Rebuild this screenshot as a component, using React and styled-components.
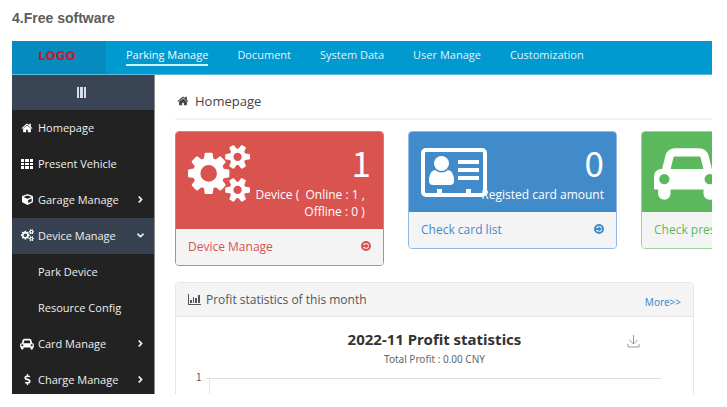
import React from 'react';
import { useState } from "react"
import styled, { createGlobalStyle } from "styled-components"
import { FaCube, FaDollarSign, FaAngleRight, FaAngleDown } from "react-icons/fa"

const GlobalStyle = createGlobalStyle`
	* {
		box-sizing: border-box;
	}
	body {
		margin: 0;
		background: white;
		font-family: "Open Sans", "Noto Sans", sans-serif;
	}
`;

const Page = styled.div`
	display: flex;
	flex-direction: column;
	height: 100vh;
	padding: 10px 15px 13px 12px;
`;

const Heading = styled.h1`
	margin: 0 0 15px;
	font: bold 14px/16px "Liberation Sans", Arial, sans-serif;
	color: #5c5c5c;
`;

const Frame = styled.div`
	display: flex;
	flex-direction: column;
	flex: 1;
	min-height: 0;
	overflow: hidden;
`;

const TopBar = styled.header`
	display: flex;
	flex: none;
	height: 34px;
	background: #0099d0;
	border-bottom: 1px solid #5fb9dd;
`;

const Logo = styled.div`
	display: flex;
	align-items: center;
	justify-content: center;
	width: 94px;
	padding: 0 4px 4px 0;
	background: #058bbd;
	color: #c01c34;
	font: bold 12px/16px "DejaVu Sans", sans-serif;
`;

const TopNav = styled.nav`
	display: flex;
	align-items: flex-start;
	gap: 29px;
	padding: 5px 20px;
`;

const TopLink = styled.a`
	padding-bottom: 1px;
	border-bottom: 2px solid ${props => props.$active ? "#d5eef8" : "transparent"};
	color: ${props => props.$active ? "#f2fafd" : "#e0f3fb"};
	font-size: 11px;
	font-weight: 500;
	line-height: 17px;
	text-decoration: none;
	white-space: nowrap;
`;

const Body = styled.div`
	display: flex;
	flex: 1;
	min-height: 0;
`;

const Sidebar = styled.nav`
	flex: none;
	width: 143px;
	overflow: hidden;
	background: #222222;
	border-right: 1px solid #8a8a8a;
`;

const Toggle = styled.button`
	display: flex;
	align-items: center;
	justify-content: center;
	width: 100%;
	height: 35px;
	padding: 0 4px 0 0;
	border: 0;
	background: #394555;
	color: #d9dcea;
	cursor: pointer;
`;

const MenuItem = styled.a`
	display: flex;
	align-items: center;
	gap: 4px;
	height: 36px;
	padding: 0 8px 1px;
	background: ${props => props.$open ? "#36424f" : "transparent"};
	color: #eeeeee;
	font-size: 11px;
	font-weight: 500;
	text-decoration: none;
	white-space: nowrap;
`;

const MenuIcon = styled.span`
	display: flex;
	justify-content: center;
	flex: none;
	width: 14px;
	color: white;
`;

const MenuLabel = styled.span`
	flex: 1;
`;

const Main = styled.main`
	flex: 1;
	min-width: 0;
	padding: 0 18px 0 20px;
`;

const Crumb = styled.h2`
	display: flex;
	align-items: center;
	gap: 6px;
	height: 45px;
	margin: 0 -18px 11px 0;
	padding: 8px 2px 0;
	border-bottom: 2px solid #f4f4f4;
	color: #444444;
	font-size: 13px;
	font-weight: 400;
`;

const Cards = styled.div`
	display: flex;
	align-items: flex-start;
	gap: 24px;
`;

const Card = styled.section`
	flex: none;
	width: 209px;
	border: 1px solid ${props => props.$edge};
	border-radius: 4px;
	overflow: hidden;
	color: ${props => props.$color};
`;

const CardTop = styled.div`
	display: flex;
	align-items: flex-start;
	justify-content: space-between;
	padding: 12px 12px 9px;
	background: ${props => props.$color};
	color: white;
`;

const CardIcon = styled.div`
	display: flex;
	flex: none;
	width: 62px;
`;

const CardFigures = styled.div`
	display: flex;
	flex-direction: column;
	align-items: flex-end;
	flex: 1;
	min-width: 0;
	text-align: right;
`;

const Count = styled.div`
	padding-bottom: 6px;
	font-family: "Noto Sans CJK SC", sans-serif;
	font-size: 35px;
	line-height: 36px;
`;

const Caption = styled.div`
	font-size: 12px;
	line-height: 17px;
	white-space: pre;
`;

const CardLink = styled.a`
	display: flex;
	align-items: center;
	justify-content: space-between;
	height: 36px;
	padding: 0 12px 2px;
	background: #f4f4f4;
	color: ${props => props.$color};
	font-size: 12px;
	text-decoration: none;
	white-space: nowrap;
`;

const Panel = styled.section`
	margin-top: 16px;
	border: 1px solid #e6e6e6;
	border-radius: 4px;
`;

const PanelHead = styled.div`
	display: flex;
	align-items: center;
	gap: 5px;
	height: 34px;
	padding: 0 12px;
	background: #f4f4f4;
	border-bottom: 1px solid #e6e6e6;
	color: #555555;
`;

const PanelTitle = styled.h3`
	flex: 1;
	margin: 0;
	font-size: 12px;
	font-weight: 400;
`;

const More = styled.a`
	padding-top: 4px;
	color: #428bca;
	font-family: "Noto Sans", sans-serif;
	font-size: 10px;
	text-decoration: none;
`;

const ChartHead = styled.div`
	display: grid;
	grid-template-columns: 1fr auto 1fr;
	padding-top: 12px;
	font-family: "Noto Sans", sans-serif;
	text-align: center;
`;

const ChartTitle = styled.h4`
	grid-column: 2;
	margin: 0;
	color: #333333;
	font-size: 15px;
	line-height: 20px;
`;

const ChartSub = styled.p`
	grid-column: 2;
	margin: 0;
	color: #666666;
	font-size: 10px;
	line-height: 20px;
`;

const Save = styled.button`
	justify-self: end;
	width: 14px;
	height: 20px;
	margin-right: 53px;
	padding: 6px 0 0;
	border: 0;
	background: none;
	color: #999999;
	cursor: pointer;
`;

const Chart = styled.div`
	display: flex;
	gap: 4px;
	padding: 1px 32px 0 20px;
	color: #555555;
	font-family: "Noto Sans CJK SC", sans-serif;
	font-size: 10px;
	line-height: 14px;
`;

const Plot = styled.svg`
	flex: 1;
	min-width: 0;
	height: 150px;
	margin-top: 8px;
`;

const Glyph = styled.svg`
	display: block;
	flex: none;
	fill: currentColor;
`;

function HomeIcon({ size }) {
	return (
		<Glyph width={size} height={size} viewBox="0 0 1664 1792">
			<path d="M1408 992v480q0 26-19 45t-45 19h-384v-384h-256v384h-384q-26 0-45-19t-19-45v-480q0-1 .5-3t.5-3l575-474 575 474q1 2 1 6zm223-69l-62 74q-8 9-21 11h-3q-13 0-21-7l-692-577-692 577q-12 8-24 7-13-2-21-11l-62-74q-8-10-7-23.500t11-21.500l719-599q32-26 76-26t76 26l244 204v-195q0-14 9-23t23-9h192q14 0 23 9t9 23v408l219 182q10 8 11 21.500t-7 23.500z" />
		</Glyph>
	)
}

function CogsIcon({ size }) {
	return (
		<Glyph width={size} height={size} viewBox="0 50 1920 1792">
			<path d="M896 896q0-106-75-181t-181-75-181 75-75 181 75 181 181 75 181-75 75-181zm768 512q0-52-38-90t-90-38-90 38-38 90q0 53 37.500 90.500t90.500 37.500 90.500-37.500 37.500-90.500zm0-1024q0-52-38-90t-90-38-90 38-38 90q0 53 37.500 90.500t90.500 37.500 90.500-37.500 37.500-90.500zm-384 421v185q0 10-7 19.500t-16 10.500l-155 24q-11 35-32 76 34 48 90 115 7 11 7 20 0 12-7 19-23 30-82.500 89.500t-78.500 59.500q-11 0-21-7l-115-90q-37 19-77 31-11 108-23 155-7 24-30 24h-186q-11 0-20-7.500t-10-17.500l-23-153q-34-10-75-31l-118 89q-7 7-20 7-11 0-21-8-144-133-144-160 0-9 7-19 10-14 41-53t47-61q-23-44-35-82l-152-24q-10-1-17-9.500t-7-19.500v-185q0-10 7-19.500t16-10.500l155-24q11-35 32-76-34-48-90-115-7-11-7-20 0-12 7-20 22-30 82-89t79-59q11 0 21 7l115 90q34-18 77-32 11-108 23-154 7-24 30-24h186q11 0 20 7.500t10 17.500l23 153q34 10 75 31l118-89q8-7 20-7 11 0 21 8 144 133 144 160 0 8-7 19-12 16-42 54t-45 60q23 48 34 82l152 23q10 2 17 10.500t7 19.500zm640 533v140q0 16-149 31-12 27-30 52 51 113 51 138 0 4-4 7-122 71-124 71-8 0-46-47t-52-68q-20 2-30 2t-30-2q-14 21-52 68t-46 47q-2 0-124-71-4-3-4-7 0-25 51-138-18-25-30-52-149-15-149-31v-140q0-16 149-31 13-29 30-52-51-113-51-138 0-4 4-7 4-2 35-20t59-34 30-16q8 0 46 46.500t52 67.500q20-2 30-2t30 2q51-71 92-112l6-2q4 0 124 70 4 3 4 7 0 25-51 138 17 23 30 52 149 15 149 31zm0-1024v140q0 16-149 31-12 27-30 52 51 113 51 138 0 4-4 7-122 71-124 71-8 0-46-47t-52-68q-20 2-30 2t-30-2q-14 21-52 68t-46 47q-2 0-124-71-4-3-4-7 0-25 51-138-18-25-30-52-149-15-149-31v-140q0-16 149-31 13-29 30-52-51-113-51-138 0-4 4-7 4-2 35-20t59-34 30-16q8 0 46 46.500t52 67.500q20-2 30-2t30 2q51-71 92-112l6-2q4 0 124 70 4 3 4 7 0 25-51 138 17 23 30 52 149 15 149 31z" />
		</Glyph>
	)
}

function CarIcon({ width, height }) {
	return (
		<Glyph width={width} height={height} viewBox="0 0 2048 1792">
			<path d="M480 1088q0-66-47-113t-113-47-113 47-47 113 47 113 113 47 113-47 47-113zm36-320h1016l-89-357q-2-8-14-17.500t-21-9.500h-768q-9 0-21 9.500t-14 17.500zm1372 320q0-66-47-113t-113-47-113 47-47 113 47 113 113 47 113-47 47-113zm160-96v384q0 14-9 23t-23 9h-96v128q0 80-56 136t-136 56-136-56-56-136v-128h-1024v128q0 80-56 136t-136 56-136-56-56-136v-128h-96q-14 0-23-9t-9-23v-384q0-93 65.500-158.500t158.500-65.500h28l105-419q23-94 104-157.500t179-63.500h768q98 0 179 63.500t104 157.500l105 419h28q93 0 158.500 65.500t65.500 158.500z" />
		</Glyph>
	)
}

function CardListIcon() {
	return (
		<Glyph width="66" height="58" viewBox="0 -4 66 58">
			<path fillRule="evenodd" d="M5 0h56a5 5 0 0 1 5 5v39a5 5 0 0 1-5 5H5a5 5 0 0 1-5-5V5a5 5 0 0 1 5-5zM5 4a1 1 0 0 0-1 1v39a1 1 0 0 0 1 1h11v-4h5v4h24v-4h5v4h11a1 1 0 0 0 1-1V5a1 1 0 0 0-1-1z" />
			<circle cx="20.500" cy="15.500" r="7.500" />
			<path d="M14 22q6.500 5 13 0q6 1 6 11q0 4-4 4H12q-4 0-4-4q0-10 6-11z" />
			<path d="M37 12h21v4H37zM37 20h21v4H37zM37 28h21v4H37z" />
		</Glyph>
	)
}

function GridIcon() {
	return (
		<Glyph width="12" height="10" viewBox="0 0 12 10">
			<path d="M0 0h3v3H0zM4 0h4v3H4zM9 0h3v3H9zM0 4h3v2H0zM4 4h4v2H4zM9 4h3v2H9zM0 7h3v3H0zM4 7h4v3H4zM9 7h3v3H9z" />
		</Glyph>
	)
}

function ArrowIcon() {
	return (
		<Glyph width="10" height="10" viewBox="0 0 20 20">
			<path fillRule="evenodd" d="M10 0a10 10 0 1 1 0 20a10 10 0 1 1 0-20zM10 4a6 6 0 1 0 0 12a6 6 0 1 0 0-12z" />
			<path d="M4 8h5V4l7 6l-7 6v-4H4z" />
		</Glyph>
	)
}

function BarsIcon() {
	return (
		<Glyph width="13" height="11" viewBox="0 0 13 11">
			<path d="M0 0h1v10h12v1H0zM2 6h2v3H2zM5 3h1v6H5zM7 4h2v5H7zM10 1h2v8h-2z" />
		</Glyph>
	)
}

const topLinks = ["Parking Manage", "Document", "System Data", "User Manage", "Customization"]

const cards = [
	{
		count: 1,
		caption: "Device (  Online : 1 ,  \nOffline : 0 )  ",
		link: "Device Manage",
		color: "#d9534f",
		edge: "#e07a77",
		icon: <CogsIcon size={62} />
	},
	{
		count: 0,
		caption: "Registed card amount",
		link: "Check card list",
		color: "#428bca",
		edge: "#8fbbe0",
		icon: <CardListIcon />
	},
	{
		count: 0,
		caption: "Present vehicle",
		link: "Check present vehicle",
		color: "#5cb85c",
		edge: "#9dd39d",
		icon: <CarIcon width={66} height={58} />
	}
]

function App() {

	const [deviceOpen, setDeviceOpen] = useState(true)

	return (
		<>
			<GlobalStyle />
			<Page>
				<Heading>4.Free software</Heading>
				<Frame>
					<TopBar>
						<Logo>LOGO</Logo>
						<TopNav>
							{topLinks.map((name, i) => (
								<TopLink href="#" key={name} $active={i === 0}>{name}</TopLink>
							))}
						</TopNav>
					</TopBar>
					<Body>
						<Sidebar>
							<Toggle aria-label="Toggle menu">
								<Glyph width="9" height="11" viewBox="0 0 9 11">
									<path d="M0 0h2v11H0zM3 0h3v11H3zM7 0h2v11H7z" />
								</Glyph>
							</Toggle>
							<MenuItem href="#">
								<MenuIcon><HomeIcon size={12} /></MenuIcon>
								<MenuLabel>Homepage</MenuLabel>
							</MenuItem>
							<MenuItem href="#">
								<MenuIcon><GridIcon /></MenuIcon>
								<MenuLabel>Present Vehicle</MenuLabel>
							</MenuItem>
							<MenuItem href="#">
								<MenuIcon><FaCube size={11} /></MenuIcon>
								<MenuLabel>Garage Manage</MenuLabel>
								<FaAngleRight size={11} />
							</MenuItem>
							<MenuItem href="#" $open={deviceOpen} onClick={() => setDeviceOpen(!deviceOpen)}>
								<MenuIcon><CogsIcon size={13} /></MenuIcon>
								<MenuLabel>Device Manage</MenuLabel>
								{deviceOpen ? <FaAngleDown size={11} /> : <FaAngleRight size={11} />}
							</MenuItem>
							{deviceOpen && (
								<>
									<MenuItem href="#">
										<MenuIcon />
										<MenuLabel>Park Device</MenuLabel>
									</MenuItem>
									<MenuItem href="#">
										<MenuIcon />
										<MenuLabel>Resource Config</MenuLabel>
									</MenuItem>
								</>
							)}
							<MenuItem href="#">
								<MenuIcon><CarIcon width={14} height={12} /></MenuIcon>
								<MenuLabel>Card Manage</MenuLabel>
								<FaAngleRight size={11} />
							</MenuItem>
							<MenuItem href="#">
								<MenuIcon><FaDollarSign size={11} /></MenuIcon>
								<MenuLabel>Charge Manage</MenuLabel>
								<FaAngleRight size={11} />
							</MenuItem>
						</Sidebar>
						<Main>
							<Crumb><HomeIcon size={12} />Homepage</Crumb>
							<Cards>
								{cards.map(card => (
									<Card key={card.link} $color={card.color} $edge={card.edge}>
										<CardTop $color={card.color}>
											<CardIcon>{card.icon}</CardIcon>
											<CardFigures>
												<Count>{card.count}</Count>
												<Caption>{card.caption}</Caption>
											</CardFigures>
										</CardTop>
										<CardLink href="#" $color={card.color}>
											{card.link}
											<ArrowIcon />
										</CardLink>
									</Card>
								))}
							</Cards>
							<Panel>
								<PanelHead>
									<BarsIcon />
									<PanelTitle>Profit statistics of this month</PanelTitle>
									<More href="#">More&gt;&gt;</More>
								</PanelHead>
								<ChartHead>
									<ChartTitle>2022-11 Profit statistics</ChartTitle>
									<Save aria-label="Save chart">
										<svg width="13" height="13" viewBox="0 0 13 13" fill="none" stroke="currentColor">
											<path d="M6.500 0v9M2.500 5l4 4l4-4M1 9v3h11V9" />
										</svg>
									</Save>
									<ChartSub>Total Profit : 0.00 CNY</ChartSub>
								</ChartHead>
								<Chart>
									<span>1</span>
									<Plot>
										<line x1="0" y1="0.500" x2="100%" y2="0.500" stroke="#dddddd" />
										<line x1="3.500" y1="0" x2="3.500" y2="100%" stroke="#e6e6e6" />
									</Plot>
								</Chart>
							</Panel>
						</Main>
					</Body>
				</Frame>
			</Page>
		</>
	);
}

export default App;
